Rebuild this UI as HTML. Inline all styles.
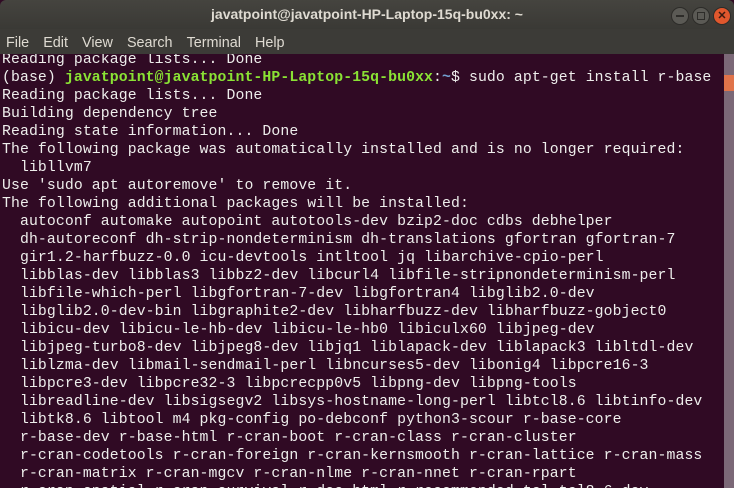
<!DOCTYPE html>
<html><head><style>
html,body{margin:0;padding:0;width:734px;height:488px;overflow:hidden;background:#300a24;}
.title{position:absolute;left:0;top:0;width:734px;height:29px;background:linear-gradient(#45443f,#3a3935);color:#dfdbd2;font:bold 14px "Liberation Sans",sans-serif;text-align:center;line-height:29px;border-radius:6px 6px 0 0;}
.menu{position:absolute;left:0;top:29px;width:734px;height:25px;background:#3c3b37;color:#dfdbd2;font:14.4px "Liberation Sans",sans-serif;line-height:28px;}
.menu span{margin-left:6px;margin-right:4px;}
.btn{position:absolute;top:7px;width:16px;height:16px;border-radius:50%;background:#5b5a55;border:1px solid #2d2c29;}
.term{position:absolute;left:0;top:54px;width:724px;height:434px;overflow:hidden;background:#300a24;}
pre{margin:-3px 0 0 2px;font:14.8px/18px "Liberation Mono",monospace;letter-spacing:0.1px;color:#eeeeec;}
.g{color:#8ae234;font-weight:bold}.b{color:#729fcf;font-weight:bold}
.sb{position:absolute;left:724px;top:54px;width:10px;height:434px;background:#7b6877;}
.th{position:absolute;left:724px;top:75px;width:10px;height:16px;background:#e0734a;}
</style></head><body>
<div class="title">javatpoint@javatpoint-HP-Laptop-15q-bu0xx: ~</div>
<div class="btn" style="left:671px"><div style="position:absolute;left:4px;top:7px;width:8px;height:2px;background:#2d2c29"></div></div>
<div class="btn" style="left:692px"><div style="position:absolute;left:4px;top:4px;width:6px;height:6px;border:1px solid #2d2c29"></div></div>
<div class="btn" style="left:713px;background:#e0572d;color:#3a1a10;font:bold 11px 'Liberation Sans',sans-serif;text-align:center;line-height:16px">✕</div>
<div class="menu"><span>File</span> <span>Edit</span> <span>View</span> <span>Search</span> <span>Terminal</span> <span>Help</span></div>
<div class="term"><pre>Reading package lists... Done
(base) <span class="g">javatpoint@javatpoint-HP-Laptop-15q-bu0xx</span>:<span class="b">~</span>$ sudo apt-get install r-base
Reading package lists... Done
Building dependency tree
Reading state information... Done
The following package was automatically installed and is no longer required:
  libllvm7
Use 'sudo apt autoremove' to remove it.
The following additional packages will be installed:
  autoconf automake autopoint autotools-dev bzip2-doc cdbs debhelper
  dh-autoreconf dh-strip-nondeterminism dh-translations gfortran gfortran-7
  gir1.2-harfbuzz-0.0 icu-devtools intltool jq libarchive-cpio-perl
  libblas-dev libblas3 libbz2-dev libcurl4 libfile-stripnondeterminism-perl
  libfile-which-perl libgfortran-7-dev libgfortran4 libglib2.0-dev
  libglib2.0-dev-bin libgraphite2-dev libharfbuzz-dev libharfbuzz-gobject0
  libicu-dev libicu-le-hb-dev libicu-le-hb0 libiculx60 libjpeg-dev
  libjpeg-turbo8-dev libjpeg8-dev libjq1 liblapack-dev liblapack3 libltdl-dev
  liblzma-dev libmail-sendmail-perl libncurses5-dev libonig4 libpcre16-3
  libpcre3-dev libpcre32-3 libpcrecpp0v5 libpng-dev libpng-tools
  libreadline-dev libsigsegv2 libsys-hostname-long-perl libtcl8.6 libtinfo-dev
  libtk8.6 libtool m4 pkg-config po-debconf python3-scour r-base-core
  r-base-dev r-base-html r-cran-boot r-cran-class r-cran-cluster
  r-cran-codetools r-cran-foreign r-cran-kernsmooth r-cran-lattice r-cran-mass
  r-cran-matrix r-cran-mgcv r-cran-nlme r-cran-nnet r-cran-rpart
  r-cran-spatial r-cran-survival r-doc-html r-recommended tcl tcl8.6-dev
</pre></div>
<div class="sb"></div><div class="th"></div>
</body></html>
